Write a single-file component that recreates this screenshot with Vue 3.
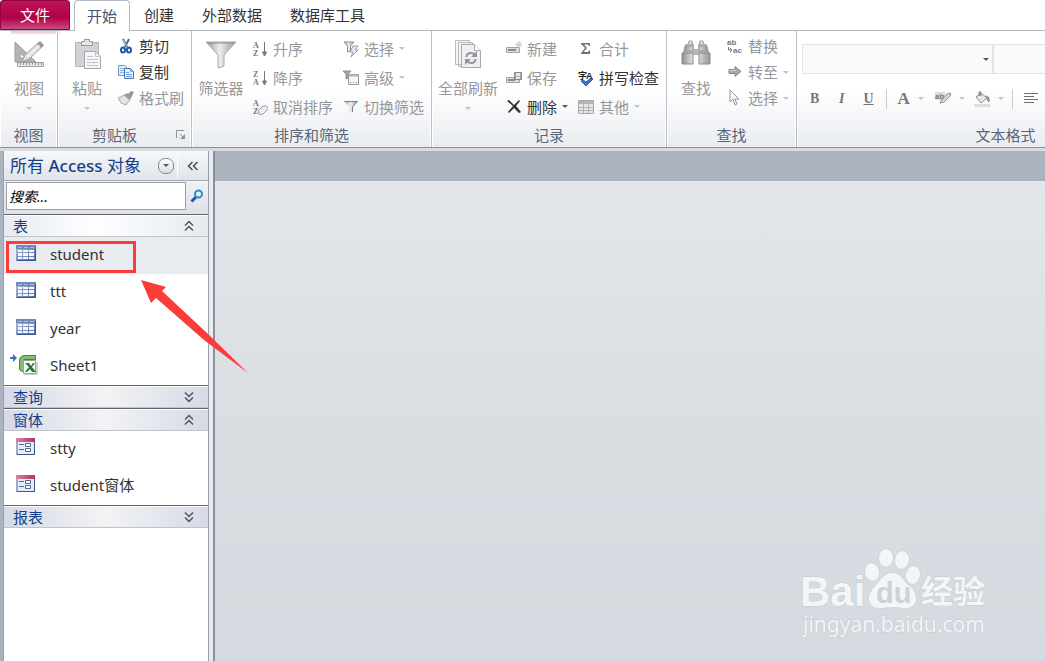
<template>
  <svg class="sprite" width="0" height="0" aria-hidden="true">
    <defs>
      <linearGradient id="g-metal" x1="0" y1="0" x2="1" y2="0">
        <stop offset="0" stop-color="#8f8f92" />
        <stop offset="0.45" stop-color="#efeff0" />
        <stop offset="1" stop-color="#96969a" />
      </linearGradient>
      <linearGradient id="g-table" x1="0" y1="0" x2="1" y2="1">
        <stop offset="0" stop-color="#b5c2df" />
        <stop offset="1" stop-color="#4e679e" />
      </linearGradient>
      <linearGradient id="g-pink" x1="0" y1="0" x2="1" y2="0">
        <stop offset="0" stop-color="#d685a6" />
        <stop offset="1" stop-color="#b03567" />
      </linearGradient>
    </defs>
    <symbol id="i-view" viewBox="0 0 32 32">
      <path d="M2 4v20h21z M7 15v5h6z" fill="#b4b4b7" fill-rule="evenodd" stroke="#9d9da1" />
      <path d="M4.500 24.500h26v4h-26z" fill="#e6e6e8" stroke="#a0a0a4" />
      <path d="M7.500 25v2m3-2v2m3-2v2m3-2v2m3-2v2m3-2v2m3-2v2m3-2v2" stroke="#98989c" />
      <path d="M9 24l3-7L26 4l4 4-14 13z" fill="#e2e2e4" stroke="#a2a2a6" />
      <path d="M24 6l3-3 4 4-3 3z" fill="#98989c" />
      <path d="M14 19L27 7" stroke="#fff" />
    </symbol>
    <symbol id="i-paste" viewBox="0 0 32 32">
      <path d="M4.500 4.500h23v24h-23z" fill="#d2d2d4" stroke="#b4b4b8" />
      <path d="M10.500 7.500v-4h3v-2h5v2h3v4z" fill="#e6e6e8" stroke="#98989c" />
      <path d="M13.500 13.500h11l5 5v12h-16z" fill="#f7f5f7" stroke="#a6a6aa" />
      <path d="M24.500 13.500v5h5M16 18.500h6m-6 3h11m-11 3h11m-11 3h11" fill="none" stroke="#c2c2c6" />
    </symbol>
    <symbol id="i-cut" viewBox="0 0 16 16">
      <path d="M5 1l4 8M11 1L7 9" stroke="#55677f" stroke-width="2" />
      <path d="M5.500 2l3 6" stroke="#c5d3e3" />
      <ellipse cx="5" cy="12" rx="2" ry="2.600" fill="none" stroke="#2057a8" stroke-width="2" />
      <ellipse cx="11" cy="12" rx="2" ry="2.600" fill="none" stroke="#2057a8" stroke-width="2" />
    </symbol>
    <symbol id="i-copy" viewBox="0 0 16 16">
      <path d="M.5 1.500h6l3 3v7h-9z" fill="#e0edfb" stroke="#6c97cc" />
      <path d="M2 4.500h4m-4 2h4m-4 2h4" stroke="#8fb5de" />
      <path d="M6.500 4.500h6l3 3v7h-9z" fill="#e8f2fd" stroke="#3f73b3" />
      <path d="M12.500 4.500v3h3M8 8.500h3m-3 2h6m-6 2h6" fill="none" stroke="#74a2d8" />
    </symbol>
    <symbol id="i-brush" viewBox="0 0 16 16">
      <path d="M0 8l6-3 6 5-4 5-5-2z" fill="#dcdcde" stroke="#b0b0b3" />
      <path d="M6 5l3-2 1 1 3-3 3 1-3 6-1 2z" fill="#99999c" />
      <path d="M3 9l4 4M5 7l4 4" stroke="#fff" />
    </symbol>
    <symbol id="i-filter-big" viewBox="0 0 32 32">
      <path d="M1 4h30L19 17v11l-6 2V17z" fill="url(#g-metal)" stroke="#aaaaae" />
      <path d="M3 5h26" stroke="#8f8f93" />
    </symbol>
    <symbol id="i-down" viewBox="0 0 16 16">
      <path d="M12.500 1v13M10.500 11l2 4 2-4z" stroke="#77777a" fill="#77777a" />
    </symbol>
    <symbol id="i-eraser" viewBox="0 0 16 16">
      <path d="M6 12l5-5q3-1 4.500 1t-.5 3l-4 4q-2 1-4 0z" fill="#ececee" stroke="#9c9ca0" />
    </symbol>
    <symbol id="i-select-filter" viewBox="0 0 16 16">
      <path d="M1 1h10L7.500 5v5l-3 1V5z" fill="url(#g-metal)" stroke="#8f8f92" />
      <path d="M10 5h5l-3 4h3l-7 7 2-5H7z" fill="#ececee" stroke="#9a9a9d" />
    </symbol>
    <symbol id="i-advanced" viewBox="0 0 16 16">
      <path d="M5.500 4.500h10v10h-10z" fill="#f4f4f5" stroke="#99999d" />
      <path d="M6 5.500h9" stroke="#b5b5b8" stroke-width="2" />
      <path d="M7 12.500h1m2 0h1m2 0h1" stroke="#8b8b8f" />
      <path d="M0 1h8L5 4v4l-2 1V4z" fill="#a4a4a7" stroke="#8f8f92" />
    </symbol>
    <symbol id="i-filter" viewBox="0 0 16 16">
      <path d="M1 2h14L10 7v6l-4 1V7z" fill="url(#g-metal)" />
      <path d="M1.500 2.500h13L9.500 8v5" fill="none" stroke="#808083" />
    </symbol>
    <symbol id="i-refresh" viewBox="0 0 32 32">
      <path d="M3.500 2.500h14v24h-14z M6.500 4.500h14v24h-14z" fill="#f5f3f5" stroke="#bbb9bd" />
      <path d="M9.500 6.500h13l6 6v17h-19z" fill="#f1eef1" stroke="#a9a7ab" />
      <path d="M22.500 6.500v6h6" fill="#fff" stroke="#b1afb3" />
      <path d="M14.500 19q0-4 4.500-4 2 0 3.500 1.500M23.500 21q0 4-4.500 4-2 0-3.500-1.500" fill="none" stroke="#969599" stroke-width="2" />
      <path d="M25 13v6h-6zM13 27v-6h6z" fill="#969599" />
    </symbol>
    <symbol id="i-new" viewBox="0 0 16 16">
      <path d="M.5 6.500h13v5H.500z" fill="#dededf" stroke="#a2a2a5" />
      <path d="M2 9h8" stroke="#8b8b8f" stroke-width="2" />
      <path d="M13 0v7M9 3.500h7M10.500 1l5 5M15.500 1l-5 5" stroke="#c8c8ca" />
    </symbol>
    <symbol id="i-save" viewBox="0 0 16 16">
      <path d="M.5 7.500h13v5H.500z" fill="#dededf" stroke="#a2a2a5" />
      <path d="M2 10h7" stroke="#8b8b8f" stroke-width="2" />
      <path d="M8.500 2.500h7v7h-7z" fill="#aaaaad" stroke="#88888b" />
      <path d="M10 3h4v3h-4zM10 7h4v2h-4z" fill="#e8e8ea" />
    </symbol>
    <symbol id="i-delete" viewBox="0 0 16 16">
      <path d="M1 2l2-1 5 5 5-5 1 1-4 5 5 6-2 1-5-5-5 5-1-1 5-6z" fill="#303036" />
    </symbol>
    <symbol id="i-sum" viewBox="0 0 16 16">
      <path d="M3 2h9v3h-1l-1-1.500H6L9 7l-3.500 4H10L11 9.500h1V13H3v-1l4-5-4-4z" fill="#737376" />
    </symbol>
    <symbol id="i-check" viewBox="0 0 16 16">
      <path d="M3 11l2-1 3 2 5-4 2 1-7 7z" fill="#3c75cb" stroke="#2c5eae" />
    </symbol>
    <symbol id="i-more" viewBox="0 0 16 16">
      <path d="M.5 1.500h15v13H.500z" fill="#e8e6e8" stroke="#a8a8ac" />
      <path d="M1 2h14v3H1z" fill="#b5b5b8" />
      <path d="M1 8.500h14M1 11.500h14M5.500 2v12M10.500 2v12" stroke="#b2b2b6" />
    </symbol>
    <symbol id="i-find" viewBox="0 0 32 32">
      <path d="M5 10V6h3l1-3h3l2 4v4h4V7l2-4h3l1 3h3v4l3 5v11H19v-9h-6v9H2V15z" fill="#b6b6b8" />
      <path d="M2 15h11v11H2zM19 15h11v11H19z" fill="url(#g-metal)" stroke="#8c8c8f" />
      <path d="M5 8h8v5H4zM19 8h8l1 5h-9z" fill="url(#g-metal)" stroke="#99999c" />
      <path d="M9 3h3v4H8zM20 3h3l1 4h-4z" fill="#dededf" stroke="#a4a4a7" />
    </symbol>
    <symbol id="i-turn" viewBox="0 0 16 16">
      <path d="M1.500 9v3h3M3 10l2 2-2 2" fill="none" stroke="#77777a" />
    </symbol>
    <symbol id="i-goto" viewBox="0 0 16 16">
      <path d="M2 5.500h6v-3l6 5-6 5v-3H2z" fill="#a8a8ab" stroke="#88888b" />
      <path d="M3 6.500h6" stroke="#dadadc" />
    </symbol>
    <symbol id="i-cursor" viewBox="0 0 16 16">
      <path d="M3 0v12l3-3 2 6 2-1-2-5h4z" fill="#fbf9fb" stroke="#99999c" />
    </symbol>
    <symbol id="i-marker" viewBox="0 0 16 16">
      <path d="M6 10l6-7 4-1-1 3-6 6-4 1z" fill="#dbdbdd" stroke="#8b8b8e" />
    </symbol>
    <symbol id="i-fill" viewBox="0 0 16 16">
      <path d="M2 6l5-4 6 5-6 5z" fill="#e8e8ea" stroke="#8c8c8f" />
      <path d="M5 5V1q2-1 2 1v3M12 5q4 0 3 6-2-1-2-4" fill="#99999c" stroke="#8c8c8f" />
      <path d="M0 13h16v3H0z" fill="#dfdcdf" />
    </symbol>
    <symbol id="i-align" viewBox="0 0 16 16">
      <path d="M1 2.500h14M1 5.500h10M1 8.500h14M1 11.500h10" stroke="#6e6e73" />
    </symbol>
    <symbol id="i-table" viewBox="0 0 20 16">
      <path d="M0 0h20v16H0z" fill="url(#g-table)" />
      <path d="M0 0h20v4H0z" fill="#7188b8" />
      <path d="M2 2.500h4m2 0h4m2 0h4" stroke="#a9b9da" />
      <path d="M2 5h4v2H2zM7 5h5v2H7zM13 5h5v2h-5zM2 8h4v3H2zM7 8h5v3H7zM13 8h5v3h-5zM2 12h4v2H2zM7 12h5v2H7zM13 12h5v2h-5z" fill="#f6f9ff" />
      <path d="M1 15.500h19M19.500 2v14" stroke="#38578f" />
    </symbol>
    <symbol id="i-form" viewBox="0 0 20 18">
      <path d="M.5.500h18v16H.500z" fill="#e5edfa" stroke="#9babc8" />
      <path d="M0 0h19v4H0z" fill="url(#g-pink)" />
      <path d="M0 4h2v13H0z" fill="#9bacc8" />
      <path d="M3 6.500h5M3 11.500h5" stroke="#51688f" />
      <path d="M9.500 5.500h5v3h-5zM9.500 10.500h5v3h-5z" fill="#fff" stroke="#51688f" />
      <path d="M1 16.500h18M18.500 4v13" stroke="#3b5688" />
    </symbol>
    <symbol id="i-excel" viewBox="0 0 28 22">
      <path d="M0 3h3V0l4 4-4 4V5H0z" fill="#3c6fcb" />
      <path d="M9.500 5q2-4 5-3.500H25.500v4H14v12q-4 0-4.500-2z" fill="#83bd6e" stroke="#398b35" />
      <path d="M14 8h14v13H14z" fill="#cfd3cf" />
      <path d="M13.500 6.500h12v13h-12z" fill="#fbfdfb" stroke="#91aa8f" />
      <path d="M15 9h4l2 3 2-3h2l-3 4 4 5h-4l-2-3-3 3h-2l4-5z" fill="#28752c" />
    </symbol>
    <symbol id="i-search" viewBox="0 0 14 14">
      <path d="M1.500 12.500L6 8" stroke="#2456a5" stroke-width="3" />
      <circle cx="8.500" cy="5" r="3.500" fill="#e6f4fc" stroke="#3588c9" stroke-width="2" />
    </symbol>
    <symbol id="i-chevrons-up" viewBox="0 0 10 12">
      <path d="M1 5.500l4-4 4 4M1 10.500l4-4 4 4" fill="none" stroke="#55565c" stroke-width="1.500" />
    </symbol>
    <symbol id="i-chevrons-down" viewBox="0 0 10 12">
      <path d="M1 1.500l4 4 4-4M1 6.500l4 4 4-4" fill="none" stroke="#55565c" stroke-width="1.500" />
    </symbol>
  </svg>

  <div class="app">
    <nav class="tabs" aria-label="功能区">
      <button type="button" class="tab tab--file">文件</button>
      <button
        v-for="t in tabs"
        :key="t"
        type="button"
        class="tab"
        :class="{ 'is-active': t === activeTab }"
        @click="activeTab = t"
      >{{ t }}</button>
    </nav>

    <div class="ribbon">
      <section
        v-for="(g, i) in groups"
        :key="i"
        class="group"
        :class="{ 'group--compact': g.compact }"
      >
        <div class="group-body">
          <button type="button" class="big" disabled>
            <svg class="big-icon"><use :href="`#i-${g.big.icon}`" /></svg>
            <span>{{ g.big.text }}</span>
            <i v-if="g.big.menu" class="caret"></i>
          </button>
          <div v-for="(col, c) in g.columns" :key="c" class="column">
            <button v-for="b in col" :key="b.text" type="button" class="small" :disabled="!b.on">
              <svg class="small-icon" viewBox="0 0 16 16">
                <use :href="`#i-${b.icon}`" />
                <text v-for="m in b.marks" :key="m.t" :x="m.x" :y="m.y" class="mark" :class="b.markClass">{{ m.t }}</text>
              </svg>
              <span>{{ b.text }}</span>
              <i v-if="b.menu" class="caret"></i>
            </button>
          </div>
        </div>
        <div class="group-label" :class="{ 'group-label--launcher': g.launcher }">
          {{ g.label }}
          <svg v-if="g.launcher" class="launcher" viewBox="0 0 10 10">
            <path d="M.5 8V.500H8M4 4l3 3" fill="none" stroke="#8e929b" />
            <path d="M9 4v5H4z" fill="#8e929b" />
          </svg>
        </div>
      </section>

      <section class="group group--format">
        <div class="format-fonts">
          <select class="combo combo--font" aria-label="字体" disabled></select>
          <i class="caret caret--dark"></i>
          <select class="combo combo--size" aria-label="字号" disabled></select>
        </div>
        <div class="format-row">
          <button type="button" class="fmt fmt--bold" disabled>B</button>
          <button type="button" class="fmt fmt--italic" disabled>I</button>
          <button type="button" class="fmt fmt--underline" disabled>U</button>
          <span class="divider"></span>
          <button type="button" class="fmt fmt--menu fmt--color" disabled>A<i class="caret"></i></button>
          <button type="button" class="fmt fmt--menu" aria-label="突出显示" disabled>
            <svg class="small-icon" viewBox="0 0 16 16">
              <path d="M0 1h10v8H0z" fill="#dddbdd" />
              <text x="0" y="8" class="mark mark--sans">ab</text>
              <use href="#i-marker" />
            </svg>
            <i class="caret"></i>
          </button>
          <button type="button" class="fmt fmt--menu" aria-label="背景色" disabled>
            <svg class="small-icon"><use href="#i-fill" /></svg>
            <i class="caret"></i>
          </button>
          <span class="divider"></span>
          <button type="button" class="fmt" aria-label="左对齐" disabled>
            <svg class="small-icon"><use href="#i-align" /></svg>
          </button>
        </div>
        <div class="group-label">文本格式</div>
      </section>
    </div>

    <main class="workspace">
      <aside class="pane">
        <header class="pane-head">
          <h1 class="pane-title">所有 <b>Access</b> 对象</h1>
          <button type="button" class="pane-menu" aria-label="浏览类别"><i class="caret caret--dark"></i></button>
          <button type="button" class="pane-fold" aria-label="折叠">
            <svg width="12" height="10" viewBox="0 0 12 10">
              <path d="M5.500 1l-4 4 4 4M10.500 1l-4 4 4 4" fill="none" stroke="#4b4d55" stroke-width="1.500" />
            </svg>
          </button>
        </header>
        <form class="search" @submit.prevent>
          <input v-model="query" type="text" placeholder="搜索..." aria-label="搜索" />
          <button type="submit" aria-label="搜索">
            <svg width="14" height="14"><use href="#i-search" /></svg>
          </button>
        </form>

        <section v-for="s in sections" :key="s.name">
          <button type="button" class="section-head" :class="{ 'section-head--plain': s.plain }" @click="s.open = !s.open">
            <span>{{ s.name }}</span>
            <svg width="10" height="12"><use :href="s.open ? '#i-chevrons-up' : '#i-chevrons-down'" /></svg>
          </button>
          <ul v-if="s.open" class="items">
            <li v-for="item in s.items" :key="item.name" class="item" :class="{ 'is-selected': item.selected }">
              <svg class="item-icon" :class="`item-icon--${item.icon}`"><use :href="`#i-${item.icon}`" /></svg>
              <span>{{ item.name }}</span>
              <span v-if="item.selected" class="marker"></span>
              <svg v-if="item.selected" class="arrow" width="107" height="94" viewBox="0 0 107 94">
                <path d="M0 0l25 7-4 4 45 42 41 40-44-33-48-42-5 5z" fill="#fc3c3a" />
              </svg>
            </li>
          </ul>
        </section>
      </aside>

      <div class="document">
        <svg class="watermark" width="190" height="94" viewBox="0 0 190 94">
          <g class="wm-shape">
            <ellipse cx="73" cy="25" rx="7" ry="9" transform="rotate(-12 73 25)" />
            <ellipse cx="87" cy="11" rx="7" ry="9" />
            <ellipse cx="103" cy="13" rx="7" ry="9" transform="rotate(10 103 13)" />
            <ellipse cx="114" cy="28" rx="7" ry="9" transform="rotate(10 114 28)" />
            <path d="M93 26c8 0 11 6 15 11 6 4 9 9 9 14 0 8-6 11-13 10-7-1-14-1-21 0-8 1-13-3-13-10 0-6 4-10 8-14 4-5 8-11 15-11z" />
          </g>
          <text x="1" y="59" class="wm-logo">Bai</text>
          <text x="77" y="56" class="wm-du">du</text>
          <text x="122" y="56" class="wm-cn">经验</text>
          <text x="4" y="85" class="wm-url">jingyan.baidu.com</text>
        </svg>
      </div>
    </main>
  </div>
</template>

<script setup>
import { reactive, ref } from "vue";

const tabs = ["开始", "创建", "外部数据", "数据库工具"];
const activeTab = ref("开始");
const query = ref("");

const groups = [
  { label: "视图", big: { icon: "view", text: "视图", menu: true }, columns: [] },
  {
    label: "剪贴板",
    launcher: true,
    compact: true,
    big: { icon: "paste", text: "粘贴", menu: true },
    columns: [
      [
        { icon: "cut", text: "剪切", on: true },
        { icon: "copy", text: "复制", on: true },
        { icon: "brush", text: "格式刷" }
      ]
    ]
  },
  {
    label: "排序和筛选",
    big: { icon: "filter-big", text: "筛选器" },
    columns: [
      [
        { icon: "down", text: "升序", marks: [{ t: "A", x: 1, y: 7 }, { t: "Z", x: 1, y: 15 }] },
        { icon: "down", text: "降序", marks: [{ t: "Z", x: 1, y: 7 }, { t: "A", x: 1, y: 15 }] },
        { icon: "eraser", text: "取消排序", marks: [{ t: "A", x: 1, y: 7 }, { t: "Z", x: 1, y: 15 }] }
      ],
      [
        { icon: "select-filter", text: "选择", menu: true },
        { icon: "advanced", text: "高级", menu: true },
        { icon: "filter", text: "切换筛选" }
      ]
    ]
  },
  {
    label: "记录",
    big: { icon: "refresh", text: "全部刷新", menu: true },
    columns: [
      [
        { icon: "new", text: "新建" },
        { icon: "save", text: "保存" },
        { icon: "delete", text: "删除", menu: true, on: true }
      ],
      [
        { icon: "sum", text: "合计" },
        { icon: "check", text: "拼写检查", on: true, marks: [{ t: "字", x: 0, y: 9 }, { t: "A", x: 8, y: 9 }], markClass: "mark--dark" },
        { icon: "more", text: "其他", menu: true }
      ]
    ]
  },
  {
    label: "查找",
    compact: true,
    big: { icon: "find", text: "查找" },
    columns: [
      [
        { icon: "turn", text: "替换", marks: [{ t: "ab", x: 0, y: 7 }, { t: "ac", x: 6, y: 15 }], markClass: "mark--sans" },
        { icon: "goto", text: "转至", menu: true },
        { icon: "cursor", text: "选择", menu: true }
      ]
    ]
  }
];

const sections = reactive([
  {
    name: "表",
    open: true,
    plain: true,
    items: [
      { icon: "table", name: "student", selected: true },
      { icon: "table", name: "ttt" },
      { icon: "table", name: "year" },
      { icon: "excel", name: "Sheet1" }
    ]
  },
  { name: "查询", open: false, items: [] },
  {
    name: "窗体",
    open: true,
    items: [
      { icon: "form", name: "stty" },
      { icon: "form", name: "student窗体" }
    ]
  },
  { name: "报表", open: false, items: [] }
]);
</script>

<style>
body {
  margin: 0;
}
</style>

<style scoped>
.sprite {
  position: absolute;
}

.app {
  min-height: 100vh;
  display: flex;
  flex-direction: column;
  overflow: hidden;
  background: #fff;
  font-family: "Noto Sans", "Noto Sans CJK SC", sans-serif;
  font-size: 15px;
  line-height: 20px;
  color: #333;
}

button {
  border: 0;
  padding: 0;
  background: none;
  font: inherit;
  color: inherit;
  white-space: nowrap;
}

/* letters inside the small icons */
.mark {
  font: bold 8px "Liberation Serif", serif;
  fill: #77777a;
}

.mark--sans {
  font: bold 8px "Liberation Sans", sans-serif;
}

.mark--dark {
  font: bold 9px "Liberation Sans", "Noto Sans CJK SC", sans-serif;
  fill: #202024;
}

/* tabs */
.tabs {
  display: flex;
  height: 30px;
  border-bottom: 1px solid #b4b8c2;
}

.tab {
  padding: 0 14px;
}

.tab--file {
  width: 70px;
  margin-right: 4px;
  border: 1px solid #92023d;
  border-radius: 3px 3px 0 0;
  background: linear-gradient(#bd1556, #b0004b 60%, #cb4a7d);
  color: #fff;
}

.tab.is-active {
  padding: 0 12px;
  margin: 0 0 -1px;
  border: 1px solid #b4b8c2;
  border-bottom: 0;
  border-radius: 4px 4px 0 0;
  background: #fff;
  color: #46536b;
}

/* ribbon */
.ribbon {
  display: flex;
  height: 116px;
  overflow: hidden;
  border-bottom: 1px solid #898e98;
  background:
    linear-gradient(#f0c5d6, #f7dfe8) 11px 0 / 49px 3px no-repeat,
    linear-gradient(#fff 50%, #e9ecf0);
  box-shadow: 0 3px 0 #d9dde2;
}

.group {
  flex: none;
  display: flex;
  flex-direction: column;
  box-sizing: border-box;
  border-right: 1px solid #bbbec8;
  box-shadow: inset -1px 0 #fff, inset 1px 0 #fff;
}

.group-body {
  flex: 1;
  display: flex;
  align-items: flex-start;
  gap: 6px;
  padding: 3px 3px 0 4px;
}

.group-label {
  position: relative;
  height: 24px;
  line-height: 24px;
  text-align: center;
  color: #5b6579;
}

.group-label--launcher {
  padding-right: 20px;
}

.launcher {
  position: absolute;
  right: 5px;
  top: 7px;
  width: 10px;
  height: 10px;
}

.big {
  display: flex;
  flex-direction: column;
  align-items: center;
  min-width: 50px;
  padding: 4px 2px 0;
}

.big-icon {
  width: 32px;
  height: 32px;
  margin-bottom: 8px;
}

.big .caret {
  margin-top: 9px;
}

.column {
  display: flex;
  flex-direction: column;
}

.small {
  display: flex;
  align-items: center;
  gap: 5px;
  height: 29px;
  padding-right: 4px;
}

.group--compact .group-body {
  padding-top: 2px;
}

.group--compact .big {
  padding-top: 5px;
}

.group--compact .small {
  height: 26px;
}

.small-icon {
  width: 16px;
  height: 16px;
}

.ribbon button:disabled {
  color: #97979a;
}

.caret {
  flex: none;
  border: 3px solid transparent;
  border-top-color: #55565c;
  border-bottom: 0;
}

button:disabled .caret {
  border-top-color: #c2c4c9;
}

.group--format {
  width: 418px;
}

.format-fonts {
  display: flex;
  align-items: center;
  padding: 13px 0 0 5px;
}

.format-fonts .caret {
  margin: 0 4px 0 -10px;
}

.combo {
  appearance: none;
  box-sizing: border-box;
  height: 30px;
  border: 1px solid #e1e3e9;
  border-radius: 0;
  background: #fafafa;
  opacity: 1;
}

.combo--font {
  width: 191px;
}

.combo--size {
  width: 72px;
}

.format-row {
  flex: 1;
  display: flex;
  align-items: center;
  padding-left: 4px;
}

.fmt {
  width: 27px;
  height: 24px;
  display: flex;
  align-items: center;
  justify-content: center;
  font: bold 14px "Liberation Serif", serif;
}

.ribbon .fmt:disabled {
  color: #77777a;
}

.fmt--italic {
  font-style: italic;
}

.fmt--underline {
  text-decoration: underline;
}

.fmt--menu {
  width: 39px;
  gap: 8px;
}

.fmt--color {
  font-size: 17px;
}

.divider {
  width: 1px;
  height: 20px;
  margin: 0 4px;
  background: #c9ccd4;
}

/* workspace */
.workspace {
  flex: 1;
  display: flex;
  padding-left: 3px;
  margin-top: 3px;
  background: #abb3bf;
}

.pane {
  flex: none;
  width: 204px;
  border: solid #989fab;
  border-width: 0 1px;
  background: #fff;
  box-shadow: 4px 0 #e8ebef, 6px 0 #8c9197;
  z-index: 1;
}

.pane-head {
  display: flex;
  align-items: center;
  height: 29px;
  padding-left: 6px;
  border-bottom: 1px solid #a5abb7;
  background: linear-gradient(#f6f7f9, #e0e4ea);
}

.pane-title {
  flex: 1;
  margin: 0;
  font-size: 17px;
  font-weight: 400;
  line-height: 24px;
  white-space: nowrap;
  color: #153f8a;
}

.pane-title b {
  font-weight: 500;
}

.pane-menu {
  width: 16px;
  height: 16px;
  display: flex;
  align-items: center;
  justify-content: center;
  margin-right: 3px;
  border: 1px solid #85888f;
  border-radius: 7px;
  background: linear-gradient(#fff, #d9dce2);
}

.pane-fold {
  width: 31px;
  height: 24px;
  border-left: 1px solid #fff;
}

.pane-fold svg {
  display: block;
  margin: auto;
}

.search {
  display: flex;
  padding: 1px 0 4px 2px;
  background: linear-gradient(#eff1f5, #dde1e8);
}

.search input {
  flex: 1;
  min-width: 0;
  box-sizing: border-box;
  height: 28px;
  border: 1px solid #999ea9;
  padding: 0 2px;
  font: italic 14px "Noto Sans", "Noto Sans CJK SC", sans-serif;
  outline: 0;
}

.search input::placeholder {
  color: #000;
}

.search button {
  width: 22px;
  display: flex;
  align-items: center;
  justify-content: center;
}

.section-head {
  display: flex;
  align-items: center;
  justify-content: space-between;
  box-sizing: border-box;
  width: 100%;
  height: 23px;
  padding: 0 14px 0 9px;
  border-top: 1px solid #65666b;
  border-bottom: 1px solid #c0c3c8;
  background: linear-gradient(90deg, #d5dae6, #f2f3f4 50%, #d5dae6);
  box-shadow: inset 0 1px #fff;
  color: #153f8a;
}

.section-head--plain {
  background: linear-gradient(90deg, #e8eaef, #fff 45%, #e6e9ee);
}

.items {
  list-style: none;
  margin: 0;
  padding: 0;
}

.item {
  position: relative;
  display: flex;
  align-items: center;
  box-sizing: border-box;
  height: 37px;
  padding: 0 0 4px 6px;
}

.item.is-selected {
  background: #e8ebef;
}

.item-icon {
  width: 20px;
  height: 16px;
  margin: 0 14px 1px 6px;
}

.item-icon--form {
  height: 18px;
}

.item-icon--excel {
  width: 28px;
  height: 22px;
  margin: 0 12px 0 0;
}

.marker {
  position: absolute;
  left: 2px;
  top: 4px;
  width: 124px;
  height: 26px;
  border: 3px solid #fc3c3a;
}

.arrow {
  position: absolute;
  left: 137px;
  top: 43px;
  z-index: 2;
}

.document {
  position: relative;
  flex: 1;
  margin: 30px 0 0 6px;
  background: linear-gradient(#e3e7ec, #dadee3 50%, #d5dae0);
}

.watermark {
  position: absolute;
  right: 56px;
  bottom: 20px;
  overflow: visible;
}

.wm-shape,
.wm-logo,
.wm-cn,
.wm-url {
  fill: #f3f5f7;
  stroke: #c3c9cf;
  stroke-width: 1px;
  paint-order: stroke;
}

.wm-logo {
  font: bold 42px "Liberation Sans", sans-serif;
}

.wm-du {
  font: bold 29px "Liberation Sans", sans-serif;
  fill: #cdd2d8;
}

.wm-cn {
  font: bold 32px "Noto Sans CJK SC", sans-serif;
}

.wm-url {
  font: 21px "Noto Sans", sans-serif;
}
</style>
